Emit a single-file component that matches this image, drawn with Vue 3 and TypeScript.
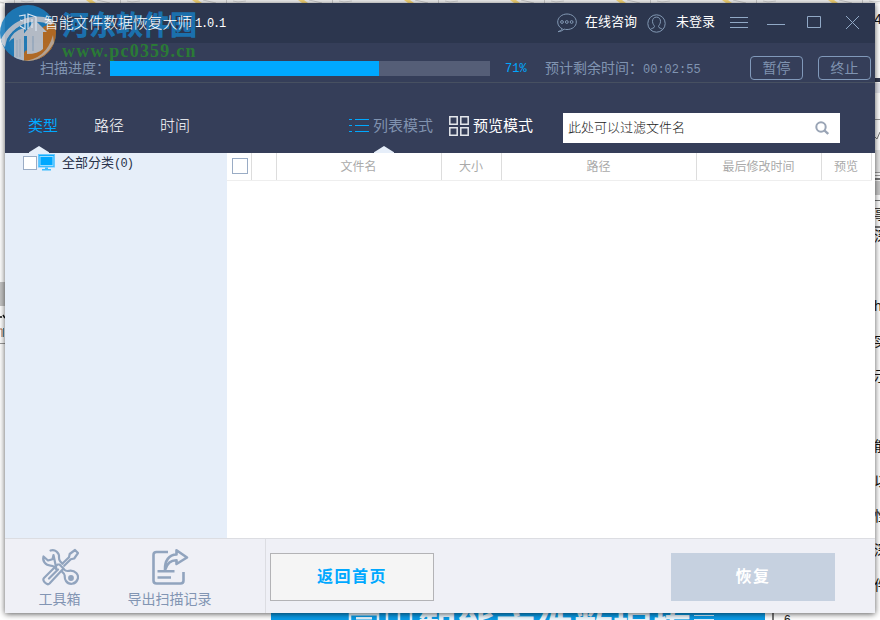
<script setup lang="ts">
import { ref } from 'vue'

const progress = ref(71)
const keyword = ref('')
const filters = ['类型', '路径', '时间']
const columns = [
  { label: '文件名', cls: 'name' },
  { label: '大小', cls: 'size' },
  { label: '路径', cls: 'path' },
  { label: '最后修改时间', cls: 'time' },
  { label: '预览', cls: 'preview' },
]
const pageText = [
  { text: '4', y: 10 },
  { text: '事', y: 205 },
  { text: '深', y: 227 },
  { text: 'h', y: 297 },
  { text: '实', y: 332 },
  { text: '示', y: 367 },
  { text: '能', y: 437 },
  { text: '以', y: 472 },
  { text: '性', y: 507 },
  { text: '深', y: 541 },
  { text: '件', y: 576 },
]
</script>

<template>
  <div class="desktop">
    <svg class="strip" width="880" height="4" viewBox="0 0 880 4">
      <defs>
        <pattern id="tile" x="14" width="106" height="4" patternUnits="userSpaceOnUse">
          <rect width="106" height="4" fill="#f5f5f5" />
          <path d="M0 0v4" stroke="#ccc" stroke-width="2" />
          <path d="M7 1l5 1 8-1" stroke="#d4d4d4" fill="none" />
          <path d="M72 0h6l4 3h-6z" fill="#fad978" />
          <path d="M83 0l13 3" stroke="#ccc" />
        </pattern>
      </defs>
      <rect width="880" height="4" fill="url(#tile)" />
    </svg>
    <span v-for="p in pageText" :key="p.y" class="frag" :style="{ top: p.y + 'px' }">{{ p.text }}</span>
    <svg class="edge" width="5" height="240" viewBox="0 0 5 240">
      <rect y="78" width="5" height="4" fill="#343b51" />
      <rect y="83" width="5" height="10" fill="#e5e6ee" />
      <rect y="119" width="5" height="1" fill="#999" />
      <path d="M0 137l2 2 3-7" stroke="#777" fill="none" />
      <rect y="150" width="5" height="22" fill="#e8e8e8" />
      <rect y="172" width="5" height="1" fill="#999" />
      <rect y="175" width="5" height="1" fill="#999" />
      <rect y="178" width="5" height="2" fill="#777" />
      <rect y="181" width="5" height="14" fill="#c9c9c9" />
      <rect y="200" width="5" height="1" fill="#777" />
      <rect y="226" width="5" height="2" fill="#777" />
    </svg>
    <svg class="left-edge" width="5" height="64" viewBox="0 0 5 64">
      <rect width="5" height="24" fill="#c4c4c4" />
      <path d="M0 35h2m1-2l2 3" stroke="#111" stroke-width="1.5" />
      <path d="M0 47h2v8" stroke="#b06b3c" fill="none" />
      <path d="M3.500 46v9" stroke="#4b88ae" />
      <rect y="61" width="5" height="1" fill="#999" />
    </svg>
    <div class="banner">
      <svg width="68" height="7" viewBox="0 0 68 7" fill="none" stroke="#e6f6ff" stroke-width="2.500">
        <path d="M5 7V1.200h28V7M11 5.200h16M42 0v7M54 0v7M66 0v7" />
      </svg>
      <span>智能文件数据恢</span>
      <svg width="20" height="7" viewBox="0 0 20 7" stroke="#d8f1ff"><path d="M0 2.500h20M0 6.500h20" /></svg>
    </div>
    <div class="ruler">6</div>

    <main class="window">
      <header class="titlebar">
        <div class="app-title">
          <svg width="24" height="24" viewBox="0 0 24 24" fill="none" stroke="#dce6f2" stroke-width="1.200">
            <path d="M2 5l6-1v14l-5-3M3 9l3 1M11 18V3l8 3v14M15 8v9" />
          </svg>
          <span>智能文件数据恢复大师</span><small>1.0.1</small>
        </div>
        <div class="links">
          <svg class="chat" width="20" height="20" viewBox="0 0 20 20" fill="none" stroke="#8298b3">
            <path d="M5.500 16C2.500 14.500.7 12 .7 9 .7 4.500 4.900 1 10 1s9.300 3.500 9.300 8-4.200 7.500-9.300 7.500c-1 0-2-.1-2.900-.4C5.800 17.500 3.500 18.500 1 18.700c2-.7 3.500-1.500 4.500-2.700z" />
            <circle cx="5" cy="9" r="1.400" /><circle cx="9.800" cy="9" r="1.400" /><circle cx="14.600" cy="9" r="1.400" />
          </svg>
          <span class="chat-text">在线咨询</span>
          <svg class="user" width="19" height="19" viewBox="0 0 19 19" fill="none" stroke="#8298b3">
            <circle cx="9.500" cy="9.500" r="8.700" />
            <path d="M3.300 15.500c1.200-1.300 4.200-1.300 4.200-3 0-1-2-2.200-2-5.200 0-2.500 1.600-4.200 4-4.200s4 1.700 4 4.200c0 3-2 4.200-2 5.200 0 1.700 3 1.700 4.200 3" />
          </svg>
          <span class="user-text">未登录</span>
          <svg class="controls" width="132" height="18" viewBox="0 0 132 18" fill="none" stroke="#91a9c6">
            <path d="M0 4.500h18M0 9.500h18M0 14.500h18M37 11.500h18M77.500 3.500h13v11h-13zM116 3l13 13M129 3l-13 13" />
          </svg>
        </div>
      </header>

      <section class="progress-row">
        <span class="scan-label">扫描进度：</span>
        <div class="bar"><div class="fill" :style="{ width: progress - 0.2 + '%' }"></div></div>
        <span class="percent">{{ progress }}%</span>
        <span class="remain">预计剩余时间：<b>00:02:55</b></span>
        <button class="pill pause">暂停</button>
        <button class="pill">终止</button>
      </section>

      <section class="toolbar">
        <nav class="tabs">
          <span v-for="(f, i) in filters" :key="f" class="tab" :class="{ active: i === 0 }">{{ f }}</span>
        </nav>
        <div class="mode list">
          <svg width="20" height="15" viewBox="0 0 20 15" stroke="#00a8ff" fill="none">
            <path d="M0 1.500h3M6 1.500h14M0 7.500h3M6 7.500h14M0 13.500h3M6 13.500h14" />
          </svg>
          <span>列表模式</span>
        </div>
        <div class="mode grid">
          <svg width="20" height="20" viewBox="0 0 20 20" stroke="#e4e7ec" stroke-width="1.500" fill="none">
            <path d="M.8.8h7.400v7.400H.8zM11.800.8h7.400v7.400h-7.400zM.8 11.800h7.400v7.400H.8zM11.800 11.800h7.400v7.400h-7.400z" />
          </svg>
          <span>预览模式</span>
        </div>
        <label class="search">
          <input v-model="keyword" placeholder="此处可以过滤文件名" />
          <svg width="14" height="14" viewBox="0 0 14 14" fill="none" stroke="#99a4b5" stroke-width="2">
            <circle cx="6" cy="6" r="4.700" /><path d="M9.500 9.500l3.700 3.500" stroke-width="2.400" />
          </svg>
        </label>
      </section>

      <section class="body">
        <aside class="side">
          <i class="check"></i>
          <svg width="17" height="17" viewBox="0 0 17 17">
            <rect x=".5" y=".5" width="16" height="12.500" fill="#13aeff" stroke="#68c9ff" />
            <rect x="2" y="2.500" width="13" height="9" fill="#00a8ff" stroke="#9bdcff" />
            <path d="M7 13.500h3v1.500h3v1.500H4V15h3z" fill="#3bbcff" />
          </svg>
          <span>全部分类<b>(0)</b></span>
        </aside>
        <div class="table">
          <div class="thead">
            <div class="cell box"><i class="check"></i></div>
            <div class="cell blank"></div>
            <div v-for="c in columns" :key="c.cls" class="cell" :class="c.cls">{{ c.label }}</div>
          </div>
        </div>
      </section>

      <footer class="footer">
        <div class="tools">
          <div class="tool kit">
            <svg width="38" height="38" viewBox="0 0 38 38" fill="none" stroke="#91a4be" stroke-width="2.200" stroke-linejoin="round" stroke-linecap="round">
              <path d="M9.500 2.500C14 1 18.500 4.500 18 9.500c-.1 2 0 2.700 1.300 4l2.200 2.200M15.500 21.500l-2.500-2.700c-1-1-1.700-1.200-3.500-1.200C4.500 17.500 1.200 13 2.500 8.500l4.500 4 4.500-1.300 1-4.200z" />
              <path d="M21.500 15.500l6.500-6.300.7-3.200L34 2l3 3-3.800 5.500-3.400.8-6.600 6.500" />
              <path d="M18.500 16.500l4 4L8.500 35.500c-2.400 2.400-8-3-5.500-5.500L16.500 16.500zM8 30.500l9-9" />
              <path d="M23 21.500c2 2 3 1.800 5 1.300 6-.9 10.500 4 8.500 8.700-2 5-8.500 5.800-11.500 1.500-1.500-2-1.300-4-1.300-5.500 0-1.500-.5-2-2.500-3.700" />
              <circle cx="30" cy="30" r="1.800" fill="#91a4be" />
            </svg>
            <span>工具箱</span>
          </div>
          <div class="tool export">
            <svg width="38" height="38" viewBox="0 0 38 38" fill="none" stroke="#91a4be" stroke-width="2.600" stroke-linejoin="round">
              <path d="M17 4H5.500Q2.500 4 2.500 7v25.500q0 3 3 3h24q3 0 3-3V24" />
              <path d="M14 22C13.500 13 18 6.500 25.500 6.500V2.200L36 9.500 25.500 16v-3.800C19.500 12.500 16.500 15 14 22z" />
              <path d="M6.500 23.200h17M6.500 29.500H20" />
            </svg>
            <span>导出扫描记录</span>
          </div>
        </div>
        <div class="actions">
          <button class="home">返回首页</button>
          <button class="restore" disabled>恢复</button>
        </div>
      </footer>
    </main>

    <i class="notch first"></i>
    <i class="notch second"></i>

    <div class="watermark">
      <svg width="58" height="58" viewBox="0 0 58 58">
        <defs><clipPath id="disc"><circle cx="28" cy="28" r="28" /></clipPath></defs>
        <g clip-path="url(#disc)">
          <rect width="58" height="58" fill="#1c7fc0" />
          <path d="M43 22l13-6v42H20l5-12q12-3 18-24z" fill="#c0701f" />
          <path d="M0 37C7 19 26 9 44 12l10 4-3 4C32 12 16 19 7 34l-2 8z" fill="#c0cad6" />
          <path d="M7 35C14 22 25 17 38 17l-4 9-9 19-12 4z" fill="#2083c2" />
          <path d="M14 56V33q-3 1-5 4 3-11 15-14v33z" fill="#c0cad6" />
          <path d="M27 49V31h-5l13-16 12 12h-4v17q-5 5-16 5z" fill="#c6cdd6" />
          <path d="M17 52V35M20 52V34" stroke="#a1b5ca" />
          <path d="M33 46V31" stroke="#a1b5ca" stroke-width="1.500" />
          <path d="M22 56q24-1 31-26l1 8-12 18z" fill="#c8ccd2" opacity=".7" />
          <path d="M26 57q18-2 28-18v19z" fill="#ba6a20" />
        </g>
      </svg>
      <div class="mark-text"><strong>河东软件园</strong><em>www.pc0359.cn</em></div>
    </div>
  </div>
</template>

<style>
body { margin: 0; overflow: hidden; }
</style>
<style scoped>
* { box-sizing: border-box; }
.desktop { position: relative; width: 880px; height: 620px; padding: 3px 5px 7px; overflow: hidden; background: #fff; font: 400 14px/20px "Liberation Sans", "Noto Sans CJK SC", sans-serif; }
svg { display: block; flex: none; }
button { margin: 0; padding: 0; font-family: inherit; font-weight: 400; }
.strip { position: absolute; left: 0; top: 0; }
.frag { position: absolute; left: 874px; width: 16px; font: 14px/18px "Liberation Sans", "Noto Sans CJK SC", sans-serif; color: #111; }
.edge { position: absolute; left: 875px; top: 0; }
.left-edge { position: absolute; left: 0; top: 282px; }
.banner { position: absolute; left: 271px; top: 613px; width: 494px; height: 7px; overflow: hidden; background: #0a9ce8; color: #eef9ff; font: bold 39px/44px "Noto Sans CJK SC", sans-serif; white-space: nowrap; padding-left: 74px; display: flex; }
.banner span { margin: -9px 3px 0 5px; }
.ruler { position: absolute; left: 772px; top: 613px; height: 7px; width: 40px; padding-left: 10px; border-left: 2px solid #777; overflow: hidden; color: #222; font-size: 12px; line-height: 14px; }
.window { position: relative; width: 870px; height: 610px; display: flex; flex-direction: column; background: #fff; box-shadow: 0 1px 6px rgba(0, 0, 0, .65); }
.titlebar { height: 40px; flex: none; background: #2c364e; display: flex; justify-content: space-between; color: #fff; }
.app-title { position: relative; z-index: 2; display: flex; align-items: center; padding-left: 12px; font-size: 15px; font-weight: 300; letter-spacing: -.2px; }
.app-title svg { margin-right: 3px; }
.app-title small { font: 12px/20px "Liberation Mono", monospace; letter-spacing: -1.200px; margin-left: 3px; padding-top: 2px; }
.links { display: flex; align-items: center; width: 318px; font-size: 13px; }
.chat-text { margin: 0 9px 2px 8px; width: 53px; }
.user-text { margin: 0 15px 2px 10px; width: 39px; }
.controls { position: relative; top: -1px; }
.progress-row { height: 40px; flex: none; background: #353e59; border-bottom: 1px solid #475061; display: flex; align-items: center; padding: 11px 4px 0 35px; color: #8094b1; }
.scan-label { width: 70px; }
.bar { width: 380px; height: 15px; background: #555e77; }
.fill { height: 100%; background: #00a8ff; }
.percent { margin-left: 15px; width: 40px; color: #00a8ff; font: 12px/20px "Liberation Mono", monospace; }
.remain { width: 205px; white-space: nowrap; }
.remain b { font: 12px/20px "Liberation Mono", monospace; }
.percent, .remain { padding-top: 1px; }
.pill { width: 53px; height: 24px; border: 1px solid #8199ba; border-radius: 4px; background: none; color: #8094b1; font-size: 14px; line-height: 22px; }
.pause { margin-right: 15px; }
.toolbar { height: 70px; flex: none; background: #353e59; display: flex; align-items: flex-start; padding: 30px 0 0 23px; color: #fff; font-size: 15px; }
.tabs { display: flex; gap: 36px; width: 321px; padding-top: 2px; }
.tab { width: 30px; line-height: 21px; font-weight: 300; }
.tab.active { color: #00a8ff; font-weight: 400; }
.mode { display: flex; align-items: center; height: 25px; white-space: nowrap; }
.list { width: 99px; color: #8092af; }
.mode svg { margin-right: 4px; }
.grid { width: 115px; padding-left: 1px; }
.search { width: 277px; height: 30px; background: #fff; display: flex; align-items: center; padding: 0 11px 0 5px; }
.search input { border: 0; outline: 0; padding: 0 0 3px; width: 0; flex: 1; height: 28px; font: 300 13px/20px "Noto Sans CJK SC", sans-serif; background: transparent; }
.search input::placeholder { color: #222; opacity: 1; }
.body { height: 385px; flex: none; display: flex; }
.side { width: 222px; background: #e6eef9; display: flex; align-items: flex-start; padding: 1px 0 0 18px; color: #28324a; font-size: 13px; }
.side span { line-height: 17px; margin-left: 7px; }
.side b { font: 12px/17px "Liberation Mono", monospace; letter-spacing: -.8px; }
.check { display: block; width: 14px; height: 14px; margin: 2px 1px 0 0; background: #fff; border: 1px solid #9aacc5; }
.table { flex: 1; }
.thead { display: flex; height: 28px; color: #aaa; font-size: 12px; line-height: 29px; border-bottom: 1px solid #eee; width: 645px; }
.cell { border-right: 1px solid #ddd; text-align: center; flex: none; padding-right: 1px; }
.box { width: 25px; padding: 3px 0 0 5px; }
.box .check { width: 16px; height: 16px; }
.blank { width: 25px; }
.name { width: 165px; }
.size { width: 60px; }
.path { width: 195px; }
.time { width: 125px; }
.preview { width: 50px; }
.footer { height: 75px; flex: none; background: #eff0f6; border-top: 1px solid #dcdde2; display: flex; }
.tools { width: 261px; border-right: 1px solid #dcdde2; display: flex; padding: 9px 0 0 30px; color: #8295b3; }
.tool { display: flex; flex-direction: column; align-items: center; white-space: nowrap; }
.tool span { line-height: 20px; margin-top: 3px; margin-right: 1px; }
.kit { width: 50px; }
.export { width: 84px; margin-left: 43px; }
.actions { flex: 1; display: flex; justify-content: space-between; padding: 14px 40px 0 4px; }
.actions button { width: 164px; height: 48px; padding-bottom: 4px; font-size: 16px; font-weight: 700; letter-spacing: 1.500px; }
.home { border: 1px solid #b3b3b6; background: #f5f5f5; color: #00a8ff; }
.restore { border: 0; background: #c6d1e0; color: #fff; }
.notch { position: absolute; width: 20px; height: 7px; top: 146px; background: #e6eef9; clip-path: polygon(50% 0, 100% 90%, 100% 100%, 0 100%, 0 90%); }
.first { left: 29px; }
.second { left: 374px; }
.watermark { position: absolute; left: 0; top: 5px; display: flex; opacity: .88; pointer-events: none; }
.mark-text { display: flex; flex-direction: column; margin-left: 4px; padding-top: 4px; }
.mark-text strong { font: 900 27px/30px "Noto Sans CJK SC", sans-serif; color: #1684ce; opacity: .85; white-space: nowrap; }
.mark-text em { font: bold 18px/20px "Liberation Serif", serif; color: #298332; letter-spacing: 1.200px; margin-top: 2px; }
</style>
